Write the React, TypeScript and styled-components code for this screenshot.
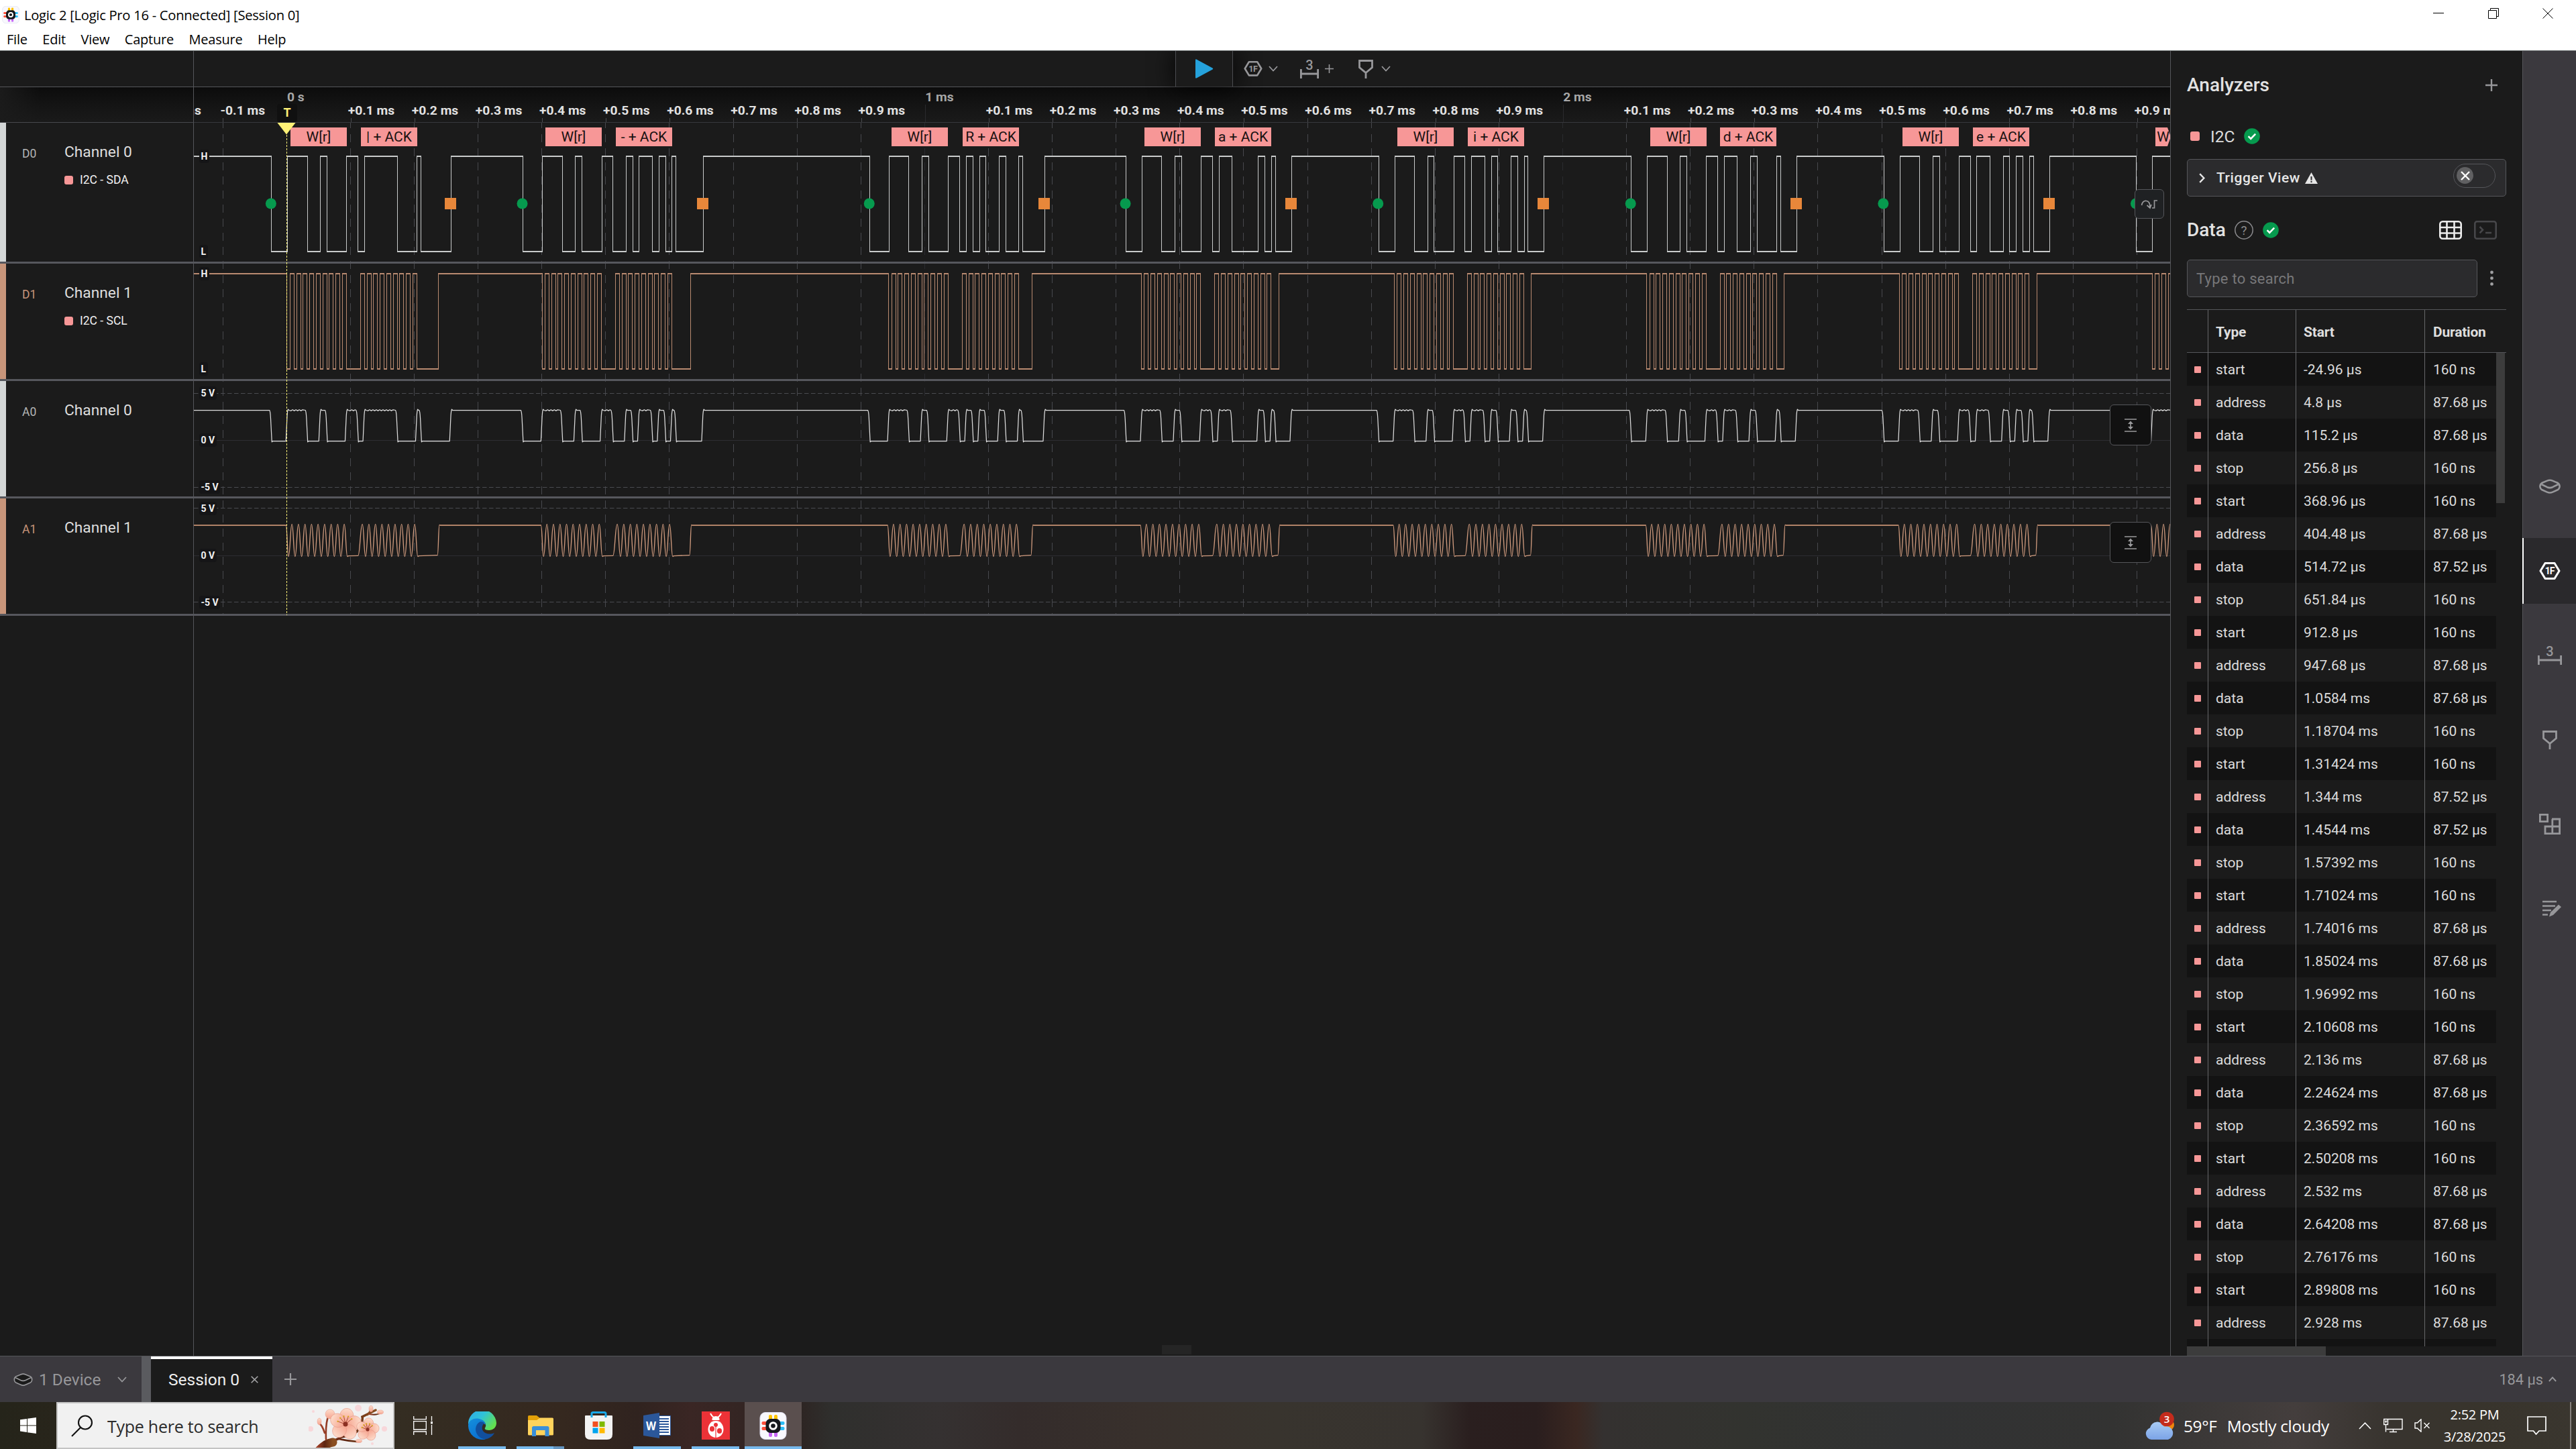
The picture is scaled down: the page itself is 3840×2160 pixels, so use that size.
import React from 'react';
import styled, { createGlobalStyle } from 'styled-components';

const Global = createGlobalStyle`
  * { box-sizing: border-box; }
  body { margin: 0; background: #1b1b1b; overflow: hidden; }
`;

const roboto = `Roboto, "Liberation Sans", sans-serif`;
const system = `"Open Sans", "Noto Sans", sans-serif`;
const line = '#55565a';
const panel = '#1b1b1b';
const chrome = '#3b393e';
const pink = '#f79797';
const green = '#069a4e';
const sand = '#c8957a';
const silver = '#d3d6d6';

/* ---------- time scale ---------- */
const PLOT_LEFT = 289;
const PLOT_WIDTH = 2946;
const PER_US = 0.9511;
const gridX = (ms: number) => 427.8 + 951.1 * ms;
const sigX = (us: number) => 428.4 + PER_US * us;

type Packet = { start: number; addr: number; data: number; stop: number; ch: string };
const packets: Packet[] = [
  { start: -24.96, addr: 4.8, data: 115.2, stop: 256.8, ch: '|' },
  { start: 368.96, addr: 404.48, data: 514.72, stop: 651.84, ch: '-' },
  { start: 912.8, addr: 947.68, data: 1058.4, stop: 1187.04, ch: 'R' },
  { start: 1314.24, addr: 1344, data: 1454.4, stop: 1573.92, ch: 'a' },
  { start: 1710.24, addr: 1740.16, data: 1850.24, stop: 1969.92, ch: 'i' },
  { start: 2106.08, addr: 2136, data: 2246.24, stop: 2365.92, ch: 'd' },
  { start: 2502.08, addr: 2532, data: 2642.24, stop: 2761.76, ch: 'e' },
  { start: 2898.08, addr: 2928, data: 3038.2, stop: 3158, ch: 'r' },
];

const byteBits = (code: number) => Array.from({ length: 8 }, (_, i) => (code >> (7 - i)) & 1);

/* edges: x positions where the line toggles; every line idles high */
function sdaEdges(): number[] {
  const out: number[] = [];
  let level = 1;
  const set = (x: number, v: number) => {
    if (v !== level) { out.push(x); level = v; }
  };
  packets.forEach((p) => {
    const a = sigX(p.addr);
    const d = sigX(p.data);
    set(sigX(p.start), 0);
    [...byteBits(0x72 << 1), 0].forEach((b, i) => set(a + 83.9 - 9.8 * (9 - i), b));
    set(a + 83.9, 1);
    [...byteBits(p.ch.charCodeAt(0)), 0].forEach((b, i) => set(d + 83.9 - 9.8 * (9 - i), b));
    set(d + 83.9, 1);
    set(d + 89.8, 0);
    set(sigX(p.stop), 1);
  });
  return out;
}

function sclEdges(): number[] {
  const out: number[] = [];
  packets.forEach((p) => {
    const a = sigX(p.addr) - 0.7;
    const d = sigX(p.data) - 0.7;
    out.push(a - 4.3);
    for (let j = 0; j < 9; j++) out.push(a + 9.75 * j, a + 9.75 * j + 6);
    for (let j = 0; j < 9; j++) out.push(d + 9.75 * j, d + 9.75 * j + 6);
    out.push(sigX(p.stop) - 19);
  });
  return out;
}

function digitalPaths(edges: number[], hi: number, lo: number) {
  let flat = '';
  let steep = '';
  let x = PLOT_LEFT;
  let level = hi;
  edges.forEach((e) => {
    const xe = Math.floor(e);
    flat += `M${x} ${level + 1}H${xe + 1}`;
    steep += `M${xe + 0.5} ${hi}V${lo + 2}`;
    x = xe;
    level = level === hi ? lo : hi;
  });
  flat += `M${x} ${level + 1}H${PLOT_LEFT + PLOT_WIDTH}`;
  return { flat, steep };
}

function analogData(edges: number[], hi: number, lo: number) {
  let d = `M${PLOT_LEFT} ${hi}`;
  let level = hi;
  edges.forEach((e, i) => {
    const next = level === hi ? lo : hi;
    const span = (edges[i + 1] ?? PLOT_LEFT + PLOT_WIDTH) - e;
    const over = next === hi ? -1.3 : 1.3;
    if (next === lo) d += `L${e - 3} ${level}Q${e - 1.8} ${level + 1} ${e - 1.2} ${level + 12}L${e + 0.6} ${next + over}`;
    else d += `L${e - 2.4} ${level}L${e - 0.6} ${next + 8}Q${e} ${next} ${e + 0.8} ${next + over}`;
    d += `L${e + 2} ${next}`;
    if (next === hi && span > 12 && span < 70) {
      for (let r = e + 5; r < e + span - 5; r += 5) d += `L${r} ${hi + 0.9}L${r + 2.5} ${hi - 0.7}`;
    }
    level = next;
  });
  return d + `L${PLOT_LEFT + PLOT_WIDTH} ${level}`;
}

function analogClock(hi: number, lo: number) {
  let d = `M${PLOT_LEFT} ${hi}`;
  let px = PLOT_LEFT;
  let py = hi;
  const curve = (x: number, y: number) => {
    const k = (x - px) * 0.48;
    d += `C${px + k} ${py} ${x - k} ${y} ${x} ${y}`;
    px = x; py = y;
  };
  const flat = (x: number, y = py) => { d += `L${x} ${y}`; px = x; py = y; };
  packets.forEach((p) => {
    [sigX(p.addr) - 0.7, sigX(p.data) - 0.7].forEach((a, n) => {
      if (n === 0) flat(a - 6, hi); else flat(a - 3.6, lo);
      if (n === 0) curve(a - 2.2, lo + 1.2);
      for (let j = 0; j < 9; j++) {
        curve(a + 9.75 * j + 2.9, hi - 1.6);
        curve(a + 9.75 * j + 7.6, lo + 1.2);
      }
      flat(px + 1.5, lo + 0.2);
    });
    flat(sigX(p.stop) - 20.5, lo - 0.8);
    curve(sigX(p.stop) - 17.6, hi - 0.6);
    flat(px + 1, hi);
  });
  return d;
}

/* the idle level between two packets, drawn heavier than the clock pulses */
const clockIdle = (y: number) =>
  packets.map((p, i) => `M${i === 0 ? PLOT_LEFT : sigX(packets[i - 1].stop) - 17} ${y}H${sigX(p.addr) - 6.5}`).join('');

const sda = sdaEdges();
const scl = sclEdges();

/* ---------- shell ---------- */
const Screen = styled.div`
  width: 3840px; height: 2160px; display: flex; flex-direction: column;
  background: ${panel}; font-family: ${roboto}; color: #dcdcdc; overflow: hidden;
`;
const TitleBar = styled.header`
  height: 76px; background: #fff; border-bottom: 1px solid #6a6f70; display: flex; flex-direction: column;
  font-family: ${system}; color: #000; flex: none; position: relative; z-index: 2;
`;
const TitleRow = styled.div`
  height: 43px; display: flex; align-items: center; padding-left: 3px; font-size: 20.2px; letter-spacing: -0.28px;
  svg { margin-right: 7px; }
`;
const WindowButtons = styled.div`
  margin-left: auto; margin-right: 1px; display: flex; align-items: center; height: 39px; align-self: flex-start;
  span { width: 81.5px; display: flex; justify-content: center; }
  svg { margin: 0; }
`;
const MenuRow = styled.nav`
  height: 30px; display: flex; align-items: center; padding-left: 10px; font-size: 20px; letter-spacing: -0.22px; gap: 22.5px;
`;
const Body = styled.div`display: flex; height: 1945px; flex: none;`;
const Capture = styled.main`width: 3235px; display: flex; flex-direction: column; position: relative;`;

/* ---------- toolbar ---------- */
const Toolbar = styled.div`
  height: 54px; border-bottom: 1px solid ${line}; display: flex; flex: none; position: relative; z-index: 1;
`;
const SideGap = styled.div`width: 289px; border-right: 1px solid ${line}; flex: none;`;
const Tools = styled.div`flex: 1; display: flex; align-items: center; padding-left: 1463px; color: #97979a;`;
const PlayButton = styled.div`
  width: 86px; height: 53px; border: solid #4b4c50; border-width: 0 1px; display: flex; align-items: center;
  padding-left: 29px; background: ${panel}; box-shadow: 0 0 34px 4px rgba(0,0,0,.7);
`;
const ToolGroup = styled.div<{ $left: number; $gap: number }>`
  display: flex; align-items: center; margin-left: ${(p) => p.$left}px; gap: ${(p) => p.$gap}px; position: relative;
`;

/* ---------- ruler ---------- */
const RulerRow = styled.div`
  height: 53px; display: flex; border-bottom: 1px solid #37383c; flex: none;
  background: linear-gradient(#0c0c0c, #141414 50%, #1a1a1a);
`;
const RulerSide = styled(SideGap)`
  border-bottom: 1px solid #48494d; height: 53px;
  background: linear-gradient(90deg, ${panel}, rgba(27,27,27,0) 60px);
`;
const Ruler = styled.div`
  flex: 1; display: flex; overflow: hidden; padding-left: 0;
  & > :first-child { margin-left: -51.7px; }
`;
const Tick = styled.div`
  width: 95.11px; flex: none; height: 53px; display: flex; flex-direction: column; justify-content: flex-end;
  font-weight: 700; font-size: 19.25px; line-height: 22px; color: #e2e2e2; white-space: nowrap;
  span { margin-left: -4px; }
  i { width: 1px; height: 7px; background: #4a4b4f; }
`;
const MajorTick = styled(Tick)`
  color: #a8a8a8; justify-content: flex-start; padding-top: 4px;
  span { margin-left: 0.5px; }
  i { height: 27px; background: #2a2a2d; }
`;

/* ---------- channels ---------- */
const ChannelRow = styled.section<{ $h: number }>`
  height: ${(p) => p.$h}px; border-bottom: 3px solid #56575d; display: flex; flex: none; box-sizing: content-box;
`;
const ColorBar = styled.div<{ $c: string }>`width: 9px; background: ${(p) => p.$c};`;
const ChannelLabel = styled.div`
  width: 280px; border-right: 1px solid ${line}; display: flex; padding: 30px 0 0 24px;
`;
const ChannelId = styled.div<{ $c: string }>`
  width: 63px; font-size: 17.5px; line-height: 33px; color: ${(p) => p.$c};
`;
const ChannelText = styled.div`
  font-size: 22.75px; line-height: 28px; color: #dedede;
`;
const ChannelSub = styled.div`
  display: flex; align-items: center; gap: 10px; font-size: 17.5px; line-height: 22px; color: #f0f0f0; margin-top: 16px;
`;
const Chip = styled.i<{ $s: number }>`
  width: ${(p) => p.$s}px; height: ${(p) => p.$s}px; border-radius: ${(p) => (p.$s > 10 ? 3 : 1)}px; background: ${pink}; flex: none;
`;
const Plot = styled.div`flex: 1; position: relative; overflow: hidden;`;
const PlotSvg = styled.svg`display: block;`;
const Frame = styled.div<{ $cut?: boolean }>`
  position: absolute; top: 7px; height: 28px; background: ${pink}; color: #1a1212; font-size: 21px; line-height: 28px;
  text-align: center; white-space: nowrap; overflow: hidden;
  clip-path: ${(p) => (p.$cut ? 'polygon(0 0, 18px 0, 100% 50%, 18px 100%, 0 100%)' : 'none')};
`;
const AxisLabel = styled.div<{ $y: number }>`
  position: absolute; left: 8px; top: ${(p) => p.$y - 10}px; height: 20px; padding: 0 2.5px; background: #151517;
  border-radius: 4px; font-weight: 700; font-size: 14px; line-height: 20px; color: #f2f2f2; white-space: pre;
`;
const OverlayButton = styled.div<{ $x: number; $y: number; $w: number; $h: number; $bg: string }>`
  position: absolute; left: ${(p) => p.$x}px; top: ${(p) => p.$y}px; width: ${(p) => p.$w}px; height: ${(p) => p.$h}px;
  border: 1px solid ${line}; border-radius: 6px; background: ${(p) => p.$bg}; display: flex; align-items: center; justify-content: center;
`;
const EmptyArea = styled.div`
  flex: 1; display: flex; align-items: flex-end;
  & > :first-child { align-self: stretch; }
`;
const Handle = styled.div`width: 44px; height: 14px; background: #252525; margin: 0 0 2px 1443px;`;
const TriggerFlag = styled.div`
  position: absolute; left: 413px; top: 79px; width: 30px; display: flex; flex-direction: column; align-items: flex-start;
  z-index: 1;
`;
const TriggerLetter = styled.div`
  width: 30px; height: 27px; border-radius: 4px; background: #101010; color: #fff176; font-weight: 700; font-size: 18px;
  line-height: 26px; text-align: center;
`;
const TriggerLine = styled.div`
  width: 1px; height: 716px; margin-left: 14px;
  background: repeating-linear-gradient(#fff176 0 3px, transparent 3px 5px);
`;

/* ---------- side panel ---------- */
const Panel = styled.aside`
  width: 525px; border-left: 1px solid ${line}; padding: 0 24px 0 24px; display: flex; flex-direction: column;
`;
const Heading = styled.h2`margin: 0; font-size: 28px; font-weight: 500; line-height: 34px; color: #e2e2e2;`;
const PanelHead = styled.div`
  display: flex; align-items: center; justify-content: space-between; height: 34px; margin-top: 34px; padding-right: 13px;
`;
const AnalyzerRow = styled.div`
  display: flex; align-items: center; height: 34px; margin-top: 42px; padding-left: 5px; font-size: 24.5px;
  span { margin: 0 14px 0 16px; }
`;
const TriggerBox = styled.div`
  height: 56px; margin-top: 17px; border: 1px solid ${line}; border-radius: 5px; background: #2b2b2d; display: flex;
  align-items: center; padding: 0 15px 0 17px; font-size: 21px; font-weight: 500; letter-spacing: 0.55px; color: #e6e6e6;
  span { margin: 0 7px 0 17px; }
`;
const Toggle = styled.div`
  margin: -7px 0 0 auto; width: 63px; height: 36px; border: 1px solid ${line}; border-radius: 18px; padding: 4.5px 4px;
`;
const Knob = styled.div`
  width: 25px; height: 25px; border-radius: 50%; background: #606062; display: flex; align-items: center; justify-content: center;
`;
const DataHead = styled.div`
  display: flex; align-items: center; height: 34px; margin-top: 33px; padding-right: 14px;
  svg { flex: none; }
`;
const HelpIcon = styled.svg`margin-left: 13.5px; margin-right: 14px;`;
const ViewIcon = styled.svg<{ $push?: boolean }>`margin-left: ${(p) => (p.$push ? 'auto' : '18px')};`;
const SearchRow = styled.div`display: flex; align-items: center; margin-top: 27px; justify-content: space-between;`;
const SearchField = styled.div`
  width: 433px; height: 56px; border: 1px solid ${line}; border-radius: 5px; background: #2b2b2d; padding-left: 13px;
  font-size: 22px; letter-spacing: 0.25px; line-height: 55px; color: #777779;
`;
const Table = styled.div`margin-top: 18px; border-top: 1px solid ${line};`;
const Cells = styled.div`display: grid; grid-template-columns: 32px 131px 192px 1fr;`;
const HeadCells = styled(Cells)`
  height: 64px; border-bottom: 1px solid ${line}; font-weight: 700; font-size: 21px; line-height: 66px; letter-spacing: -0.2px; color: #dedede;
`;
const Cell = styled.div`
  border-right: 1px solid #66676a; padding-left: 11px; white-space: nowrap; display: flex; align-items: center;
  &:first-child { padding-left: 11px; }
  &:last-child { border-right: 0; padding-left: 12px; }
`;
const RowsWrap = styled.div`display: flex; height: 1481px;`;
const Rows = styled.div`width: 461px; overflow: hidden;`;
const DataRow = styled(Cells)<{ $dark: boolean }>`
  height: 49px; background: ${(p) => (p.$dark ? '#131313' : panel)}; font-size: 21px; color: #dcdcdc;
`;
const VThumb = styled.div`width: 13px; height: 224px; background: #3c3c3c;`;
const HThumb = styled.div`width: 207px; height: 14px; background: #3c3c3c;`;
const Rail = styled.nav`
  width: 80px; background: ${chrome}; border-left: 1px solid ${line}; display: flex; flex-direction: column; gap: 28px; padding-top: 600px;
`;
const RailButton = styled.div<{ $on?: boolean }>`
  height: 98px; display: flex; align-items: center; justify-content: center; color: ${(p) => (p.$on ? '#fff' : '#97979a')};
  background: ${(p) => (p.$on ? '#2a292c' : 'transparent')};
  border-left: 2px solid ${(p) => (p.$on ? '#fff' : 'transparent')}; margin-left: -1px;
`;

/* ---------- footer ---------- */
const Footer = styled.footer`
  height: 69px; background: ${chrome}; border-top: 1px solid ${line}; display: flex; align-items: center; font-size: 24.5px;
  color: #97979a; flex: none;
`;
const Device = styled.div`
  width: 225px; height: 68px; border-right: 14px solid #5a5b5f; display: flex; align-items: center; padding-left: 20px;
  span { margin: 0 25px 0 9px; }
`;
const SessionTab = styled.div`
  width: 181px; height: 68px; background: ${panel}; border-top: 4px solid #fff; color: #ededed; display: flex; align-items: center;
  padding: 0 21px 3px 26px; justify-content: space-between;
`;
const Plus = styled.div`margin-left: 18px; display: flex;`;
const Timing = styled.div`margin-left: auto; padding-right: 29px; display: flex; align-items: center; gap: 8px; font-size: 21.75px;`;

/* ---------- taskbar ---------- */
const Taskbar = styled.div`
  height: 70px; display: flex; align-items: center; font-family: ${system}; color: #fff; flex: none;
  background: linear-gradient(90deg, #25241a 0, #28251b 84px, #342d22 600px, #35281f 840px, #30231f 950px, #3a2624 1030px, #2d2422 1190px,
    #2f2f2d 1240px, #353131 1400px, #342c2b 1520px, #38302c 1700px, #38342e 1900px, #37332f 2120px, #2a1f1f 2190px, #2a1e1e 2290px,
    #3a2721 2350px, #343130 2390px, #32332f 2600px, #313233 2850px, #333332 3150px, #443e3d 3420px, #38342f 3560px, #38342c 3700px, #3a362f 3840px);
`;
const StartButton = styled.div`width: 84px; display: flex; justify-content: center;`;
const SearchBox = styled.div`
  width: 504px; height: 70px; background: #f1f1f1; border: 2px solid #c3c3c3; display: flex; align-items: center; color: #2b2b2b;
  padding-left: 20px; font-size: 25px; letter-spacing: -0.25px; overflow: hidden;
  span { margin: 2px 0 0 21px; white-space: nowrap; }
  svg:last-child { margin-left: auto; }
`;
const TaskIcon = styled.div<{ $active?: boolean; $run?: boolean; $group?: boolean }>`
  width: 87px; height: 70px; display: flex; align-items: center; justify-content: center;
  background: ${(p) => (p.$active ? 'linear-gradient(#76b9ed,#76b9ed) 0 100%/85px 4px no-repeat, #5a4f4e' : 'none')};
  ${(p) => p.$active && 'width: 85px;'}
  ${(p) => p.$run && !p.$active && `background: linear-gradient(90deg, #76b9ed ${p.$group ? '55px, #6394bf 55px' : '71px'}) 8px 100%/71px 4px no-repeat;`}
`;
const Weather = styled.div`
  margin-left: auto; display: flex; align-items: center; font-size: 24.4px; letter-spacing: -0.3px; white-space: pre;
  svg { margin-right: 14px; }
  span + span { margin-left: 15px; }
`;
const Tray = styled.div`display: flex; align-items: center; margin-left: 44px; gap: 17.5px; width: 123px;`;
const Clock = styled.div`
  width: 100px; text-align: center; font-size: 20px; line-height: 33px; letter-spacing: -0.25px; white-space: nowrap;
`;
const Notice = styled.div`margin-left: 28px; width: 66px; height: 70px; border-right: 2px solid #85807c; display: flex; align-items: center;`;
const DesktopEdge = styled.div`width: 7px;`;

/* ---------- icons ---------- */
const IconSvg = styled.svg`overflow: visible;`;
const SaleaeIcon = ({ s }: { s: number }) => (
  <svg width={s} height={s} viewBox="0 0 40 41">
    <rect x="0.5" y="0.5" width="39" height="40" rx="8" fill="#f8f8fd" stroke="#dfdff0" />
    <rect x="13.5" y="4" width="5" height="9" rx="2" fill="#ffc400" /><rect x="21.5" y="4" width="5" height="9" rx="2" fill="#ffc400" />
    <rect x="13.5" y="28" width="5" height="9" rx="2" fill="#c566f5" /><rect x="21.5" y="28" width="5" height="9" rx="2" fill="#c566f5" />
    <rect x="3" y="14" width="9" height="5" rx="2" fill="#ff4f3c" /><rect x="3" y="22" width="9" height="5" rx="2" fill="#ff4f3c" />
    <rect x="28" y="14" width="9" height="5" rx="2" fill="#2bbdf7" /><rect x="28" y="22" width="9" height="5" rx="2" fill="#2bbdf7" />
    <rect x="9" y="10" width="22" height="21" rx="7" fill="#14171c" />
    <circle cx="20" cy="20.5" r="4.8" fill="none" stroke="#fff" strokeWidth="3" />
  </svg>
);
const HexIcon = ({ w, h, fs }: { w: number; h: number; fs: number }) => (
  <IconSvg width={w} height={h} viewBox="0 0 32 27" fill="none" stroke="currentColor" strokeWidth="3">
    <path d="M9 2H23L30 13.5L23 25H9L2 13.5Z" strokeLinejoin="round" />
    <text x="15.7" y="18.6" textAnchor="middle" fontFamily="Roboto" fontWeight="700" fontSize={fs} letterSpacing="-0.8" fill="currentColor" stroke="none">1F</text>
  </IconSvg>
);
const MeasureIcon = ({ w }: { w: number }) => (
  <IconSvg width={w} height={28} viewBox={`0 0 ${w} 28`} fill="none" stroke="currentColor" strokeWidth="2.8">
    <path d={`M1.4 14V28M${w - 1.4} 14V28M1.4 21H${w - 1.4}`} />
    <text x={w / 2} y="15" textAnchor="middle" fontFamily="Roboto" fontWeight="500" fontSize="20" fill="currentColor" stroke="none">3</text>
  </IconSvg>
);
const MarkerIcon = () => (
  <svg width="22" height="28" viewBox="0 0 22 28" fill="none" stroke="currentColor" strokeWidth="2.8">
    <path d="M1.5 1.5H20.5V11.5L11 19.5L1.5 11.5ZM11 19V28" />
  </svg>
);
const Chevron = ({ w = 14, h = 9, up = false, sw = 1.8 }: { w?: number; h?: number; up?: boolean; sw?: number }) => (
  <svg width={w} height={h} viewBox="0 0 14 9" fill="none" stroke="currentColor" strokeWidth={sw}>
    <path d={up ? 'M1 8L7 1.5L13 8' : 'M1 1L7 7.5L13 1'} />
  </svg>
);
const CheckBadge = () => (
  <svg width="24" height="24" viewBox="0 0 24 24">
    <circle cx="12" cy="12" r="11.8" fill={green} />
    <path d="M6.6 12.2L10.2 15.8L17.2 8.6" fill="none" stroke="#fff" strokeWidth="2.6" />
  </svg>
);
const DeviceIcon = ({ w, h, fill, sw = 2.6 }: { w: number; h: number; fill: string; sw?: number }) => (
  <svg width={w} height={h} viewBox="0 0 32 22" fill={fill} stroke="currentColor" strokeWidth={sw} strokeLinejoin="round">
    <path d="M12 2.6Q16 .8 20 2.6L28 6Q31 8 30.5 12Q30 15 28 16L20 19.6Q16 21.4 12 19.6L4 16Q2 15 1.5 12Q1 8 4 6Z" />
    <path d="M3.5 8L12 12.2Q16 14 20 12.2L28.5 8" fill="none" />
  </svg>
);

const BlossomArt = () => {
  const flower = (cx: number, cy: number, r: number, key: string) => (
    <g key={key} transform={`translate(${cx} ${cy})`}>
      {[0, 72, 144, 216, 288].map((a) => (
        <ellipse key={a} cx="0" cy={-r * 0.58} rx={r * 0.46} ry={r * 0.5} fill="url(#petal)" stroke="#e79a8a" strokeWidth="0.6" transform={`rotate(${a + 8})`} />
      ))}
      {[-70, -40, -12, 20, 50].map((a) => (
        <g key={a} transform={`rotate(${a})`}>
          <path d={`M0 0V${-r * 0.52}`} stroke="#a33f2c" strokeWidth="0.8" />
          <circle cy={-r * 0.55} r="1.2" fill="#d9a520" />
        </g>
      ))}
      <circle r={r * 0.16} fill="#8c2f22" />
    </g>
  );
  return (
    <svg width="126" height="66" viewBox="460 2092 126 66">
      <defs>
        <linearGradient id="petal" x1="0" y1="0" x2="0" y2="1"><stop offset="0" stopColor="#fddccb" /><stop offset="1" stopColor="#f6a48f" /></linearGradient>
        <linearGradient id="bark"><stop offset="0" stopColor="#a8452c" /><stop offset="0.5" stopColor="#5c2410" /><stop offset="1" stopColor="#8a4e20" /></linearGradient>
      </defs>
      {[[534, 2099, 5], [463, 2130, 4], [573, 2130, 4], [467, 2104, 2], [555, 2152, 2]].map(([x, y, r]) => (
        <circle key={x} cx={x} cy={y} r={r} fill="#f9cdd2" opacity="0.75" />
      ))}
      <g fill="none" stroke="url(#bark)" strokeLinecap="round">
        <path d="M466 2166Q478 2150 490 2149Q502 2147 509 2142Q524 2140 532 2134Q542 2120 540 2112Q552 2106 560 2102" strokeWidth="3.5" />
        <path d="M472 2168Q482 2152 496 2150" strokeWidth="13" />
        <path d="M486 2146Q485 2120 490 2110M484 2136Q480 2124 476 2122M505 2145Q518 2148 532 2149M548 2109Q552 2104 553 2100" strokeWidth="2.6" />
        <path d="M550 2108Q562 2110 568 2106" strokeWidth="2" />
      </g>
      <g fill="url(#petal)" stroke="#e79a8a" strokeWidth="0.5">
        <ellipse cx="492" cy="2108" rx="7" ry="7" /><ellipse cx="476" cy="2119" rx="3" ry="5" /><ellipse cx="553" cy="2100" rx="3" ry="4.5" />
        <ellipse cx="567" cy="2105" rx="4.5" ry="3" /><ellipse cx="535" cy="2148" rx="4.5" ry="2.6" />
      </g>
      {flower(515, 2123, 22, 'a')}
      {flower(548, 2131, 16, 'b')}
    </svg>
  );
};

/* ---------- plot parts ---------- */
const Grid = ({ top, h }: { top: number; h: number }) => (
  <g stroke="#47484d" strokeWidth="1">
    {Array.from({ length: 31 }, (_, i) => i - 1).map((n) =>
      n === 0 ? null : (
        <line key={n} x1={Math.round(gridX(n / 10)) - 0.5} x2={Math.round(gridX(n / 10)) - 0.5} y1={top} y2={top + h}
          stroke={n % 10 === 0 ? '#2a2b2f' : undefined} strokeDasharray="12 9" strokeDashoffset={(top - 179) % 21} />
      ))}
  </g>
);

const Digital = ({ top, h, hi, lo, edges, color, children }: { top: number; h: number; hi: number; lo: number; edges: number[]; color: string; children?: React.ReactNode }) => {
  const { flat, steep } = digitalPaths(edges, hi, lo);
  return (
    <PlotSvg width={PLOT_WIDTH} height={h} viewBox={`${PLOT_LEFT} ${top} ${PLOT_WIDTH} ${h}`}>
      <Grid top={top} h={h} />
      <path d={steep} stroke={color} fill="none" />
      <path d={flat} stroke={color} strokeWidth="2" fill="none" />
      {children}
    </PlotSvg>
  );
};

const Analog = ({ top, v5, v0, n5, d, color, w, idle }: { top: number; v5: number; v0: number; n5: number; d: string; color: string; w: number; idle?: string }) => (
  <PlotSvg width={PLOT_WIDTH} height={172} viewBox={`${PLOT_LEFT} ${top} ${PLOT_WIDTH} 172`}>
    <Grid top={top} h={172} />
    <path d={`M289 ${v5 + 0.5}H3235M289 ${n5 + 0.5}H3235`} stroke="#4a4b50" strokeDasharray="6.5 3.5" />
    <path d={`M289 ${v0 + 0.5}H3235`} stroke="#2d2d32" />
    <path d={d} stroke={color} strokeWidth={w} fill="none" strokeLinejoin="round" />
    {idle && <path d={idle} stroke="#b08267" strokeWidth="2" fill="none" />}
  </PlotSvg>
);

const FitIcon = () => (
  <svg width="18" height="20" viewBox="0 0 18 20" fill="none" stroke="#9a9a9c" strokeWidth="1.6">
    <path d="M0 1H18M0 19H18" /><path d="M9 5V15" /><path d="M9 3.4L13 8H5ZM9 16.6L13 12H5Z" fill="#9a9a9c" stroke="none" />
  </svg>
);

const rows: [string, string, string][] = [
  ['start', '-24.96 µs', '160 ns'], ['address', '4.8 µs', '87.68 µs'], ['data', '115.2 µs', '87.68 µs'], ['stop', '256.8 µs', '160 ns'],
  ['start', '368.96 µs', '160 ns'], ['address', '404.48 µs', '87.68 µs'], ['data', '514.72 µs', '87.52 µs'], ['stop', '651.84 µs', '160 ns'],
  ['start', '912.8 µs', '160 ns'], ['address', '947.68 µs', '87.68 µs'], ['data', '1.0584 ms', '87.68 µs'], ['stop', '1.18704 ms', '160 ns'],
  ['start', '1.31424 ms', '160 ns'], ['address', '1.344 ms', '87.52 µs'], ['data', '1.4544 ms', '87.52 µs'], ['stop', '1.57392 ms', '160 ns'],
  ['start', '1.71024 ms', '160 ns'], ['address', '1.74016 ms', '87.68 µs'], ['data', '1.85024 ms', '87.68 µs'], ['stop', '1.96992 ms', '160 ns'],
  ['start', '2.10608 ms', '160 ns'], ['address', '2.136 ms', '87.68 µs'], ['data', '2.24624 ms', '87.68 µs'], ['stop', '2.36592 ms', '160 ns'],
  ['start', '2.50208 ms', '160 ns'], ['address', '2.532 ms', '87.68 µs'], ['data', '2.64208 ms', '87.68 µs'], ['stop', '2.76176 ms', '160 ns'],
  ['start', '2.89808 ms', '160 ns'], ['address', '2.928 ms', '87.68 µs'],
];

const Label = ({ id, name, sub, color }: { id: string; name: string; sub?: string; color: string }) => (
  <ChannelLabel>
    <ChannelId $c={color}>{id}</ChannelId>
    <ChannelText>
      {name}
      {sub && <ChannelSub><Chip $s={13} />{sub}</ChannelSub>}
    </ChannelText>
  </ChannelLabel>
);

const ticks = Array.from({ length: 32 }, (_, i) => i - 2);
const frameLeft = (us: number) => Math.floor(sigX(us) + 0.2) - PLOT_LEFT;

export default function App() {
  return (
    <Screen>
      <Global />
      <TitleBar>
        <TitleRow>
          <SaleaeIcon s={26} />
          Logic 2 [Logic Pro 16 - Connected] [Session 0]
          <WindowButtons>
            <span><svg width="16" height="16"><path d="M0 7.5H16" stroke="#000" /></svg></span>
            <span><svg width="16" height="16" fill="none" stroke="#000"><path d="M.5 3.5H12.5V15.5H.5ZM3.5 3V.5H15.5V12.5H13" /></svg></span>
            <span><svg width="16" height="16" fill="none" stroke="#000"><path d="M.5 .5L15.5 15.5M15.5 .5L.5 15.5" /></svg></span>
          </WindowButtons>
        </TitleRow>
        <MenuRow>
          {['File', 'Edit', 'View', 'Capture', 'Measure', 'Help'].map((m) => <span key={m}>{m}</span>)}
        </MenuRow>
      </TitleBar>

      <Body>
        <Capture>
          <Toolbar>
            <SideGap />
            <Tools>
              <PlayButton>
                <svg width="27" height="29" viewBox="0 0 27 29"><path d="M1.5 .4L25.6 13.4Q27 14.5 25.6 15.6L1.5 28.6Q0 29 0 27.6V1.4Q0 0 1.5 .4Z" fill="#25a2dc" /></svg>
              </PlayButton>
              <ToolGroup $left={16} $gap={9}><HexIcon w={28} h={24.5} fs={14.5} /><Chevron /></ToolGroup>
              <ToolGroup $left={33} $gap={8.5}>
                <MeasureIcon w={28} />
                <svg width="13" height="13"><path d="M6.5 0V13M0 6.5H13" stroke="currentColor" strokeWidth="1.6" /></svg>
              </ToolGroup>
              <ToolGroup $left={37.5} $gap={12}><MarkerIcon /><Chevron /></ToolGroup>
            </Tools>
          </Toolbar>

          <RulerRow>
            <RulerSide />
            <Ruler>
              {ticks.map((n) => {
                if (n % 10 === 0) return <MajorTick key={n}><span>{n === 0 ? '0 s' : `${n / 10} ms`}</span><i /></MajorTick>;
                const label = n < 0 ? `-0.${-n} ms` : `+0.${n % 10} ms`;
                return <Tick key={n}><span>{label}</span><i /></Tick>;
              })}
            </Ruler>
          </RulerRow>

          <ChannelRow $h={207}>
            <ColorBar $c={silver} />
            <Label id="D0" name="Channel 0" sub="I2C - SDA" color="#b4b6b6" />
            <Plot>
              <Digital top={183} h={207} hi={232} lo={374} edges={sda} color="#c9cbcb">
                {packets.map((p) => (
                  <g key={p.start}>
                    <circle cx={sigX(p.start) - 0.8} cy="303.5" r="8" fill={green} />
                    <rect x={Math.floor(sigX(p.stop)) - 9} y="295" width="17" height="17" fill="#e8873a" />
                  </g>
                ))}
              </Digital>
              {packets.slice(0, 7).map((p) => (
                <React.Fragment key={p.addr}>
                  <Frame style={{ left: frameLeft(p.addr), width: 84 }}>W[r]</Frame>
                  <Frame style={{ left: frameLeft(p.data), width: 84 }}>{p.ch} + ACK</Frame>
                </React.Fragment>
              ))}
              <Frame $cut style={{ left: frameLeft(2928), width: 23 }}>W</Frame>
              <AxisLabel $y={49.5}>H</AxisLabel>
              <AxisLabel $y={192}>L</AxisLabel>
              <OverlayButton $x={2893} $y={99} $w={44} $h={44} $bg="#1f2123">
                <svg width="26" height="17" viewBox="0 0 26 17" fill="none" stroke="#98989a" strokeWidth="1.7">
                  <path d="M1.5 10Q3 3 8.5 3.5Q14 4 14 13M9.5 10L14 14L16 9M17 14H20.5V3H25" />
                </svg>
              </OverlayButton>
            </Plot>
          </ChannelRow>

          <ChannelRow $h={172}>
            <ColorBar $c={sand} />
            <Label id="D1" name="Channel 1" sub="I2C - SCL" color={sand} />
            <Plot>
              <Digital top={393} h={172} hi={407} lo={549} edges={scl} color="#b98a70" />
              <AxisLabel $y={14.5}>H</AxisLabel>
              <AxisLabel $y={157}>L</AxisLabel>
            </Plot>
          </ChannelRow>

          <ChannelRow $h={172}>
            <ColorBar $c={silver} />
            <Label id="A0" name="Channel 0" color="#b4b6b6" />
            <Plot>
              <Analog top={568} v5={586} v0={656} n5={726} d={analogData(sda, 611.5, 657.5)} color="#dcdcdc" w={1.25} />
              <AxisLabel $y={18}>5 V</AxisLabel>
              <AxisLabel $y={88}>0 V</AxisLabel>
              <AxisLabel $y={158}>-5 V</AxisLabel>
              <OverlayButton $x={2856} $y={35} $w={62} $h={61} $bg="#111111"><FitIcon /></OverlayButton>
            </Plot>
          </ChannelRow>

          <ChannelRow $h={172}>
            <ColorBar $c={sand} />
            <Label id="A1" name="Channel 1" color={sand} />
            <Plot>
              <Analog top={743} v5={757} v0={828} n5={897} d={analogClock(783, 828.4)} idle={clockIdle(783)} color="#d09b7e" w={1.35} />
              <AxisLabel $y={15}>5 V</AxisLabel>
              <AxisLabel $y={85}>0 V</AxisLabel>
              <AxisLabel $y={155}>-5 V</AxisLabel>
              <OverlayButton $x={2856} $y={35} $w={62} $h={61} $bg="#111111"><FitIcon /></OverlayButton>
            </Plot>
          </ChannelRow>

          <EmptyArea><SideGap /><Handle /></EmptyArea>

          <TriggerFlag>
            <TriggerLetter>T</TriggerLetter>
            <PlotSvg width="28" height="19" viewBox="0 -1 28 19"><path d="M.5 0H27.5L14 17.5Z" fill="#fff176" /></PlotSvg>
            <TriggerLine />
          </TriggerFlag>
        </Capture>

        <Panel>
          <PanelHead>
            <Heading>Analyzers</Heading>
            <svg width="18" height="18"><path d="M9 0V18M0 9H18" stroke="#97979a" strokeWidth="2.4" /></svg>
          </PanelHead>
          <AnalyzerRow><Chip $s={14} /><span>I2C</span><CheckBadge /></AnalyzerRow>
          <TriggerBox>
            <svg width="9" height="15" viewBox="0 0 9 15" fill="none" stroke="#e6e6e6" strokeWidth="2.4"><path d="M1.2 1.2L7.4 7.5L1.2 13.8" /></svg>
            <span>Trigger View</span>
            <svg width="19" height="17" viewBox="0 0 19 17"><path d="M9.5 0L19 17H0Z" fill="#e6e6e6" /><path d="M9.5 6V11.5M9.5 12.8V15" stroke="#2b2b2d" strokeWidth="2" /></svg>
            <Toggle><Knob><svg width="14" height="14"><path d="M1 1L13 13M13 1L1 13" stroke="#fff" strokeWidth="2.4" /></svg></Knob></Toggle>
          </TriggerBox>
          <DataHead>
            <Heading>Data</Heading>
            <HelpIcon width="28" height="28" viewBox="0 0 28 28">
              <circle cx="14" cy="14" r="13.2" fill="none" stroke="#8b8b8e" strokeWidth="1.5" />
              <text x="14" y="20.5" textAnchor="middle" fontFamily="Roboto" fontSize="19" fill="#8b8b8e">?</text>
            </HelpIcon>
            <CheckBadge />
            <ViewIcon $push width="34" height="28" viewBox="0 0 34 28" fill="none" stroke="#ececec" strokeWidth="2.6">
              <rect x="1.3" y="1.3" width="31.4" height="25.4" rx="4" /><path d="M11.5 1V27M22.5 1V27M1 10H33M1 18.5H33" />
            </ViewIcon>
            <ViewIcon width="34" height="28" viewBox="0 0 34 28" fill="none" stroke="#47474a" strokeWidth="2.6">
              <rect x="1.3" y="1.3" width="31.4" height="25.4" rx="3" /><path d="M8.5 9L13 13.7L8.5 18.4M17 18H26" />
            </ViewIcon>
          </DataHead>
          <SearchRow>
            <SearchField>Type to search</SearchField>
            <svg width="41" height="24" fill="#a0a0a2"><circle cx="19.5" cy="3" r="2.4" /><circle cx="19.5" cy="11.7" r="2.4" /><circle cx="19.5" cy="20.4" r="2.4" /></svg>
          </SearchRow>
          <Table>
            <HeadCells><Cell /><Cell>Type</Cell><Cell>Start</Cell><Cell>Duration</Cell></HeadCells>
            <RowsWrap>
              <Rows>
                {rows.map(([type, start, dur], i) => (
                  <DataRow key={i} $dark={i % 2 === 0}>
                    <Cell><Chip $s={10} /></Cell><Cell>{type}</Cell><Cell>{start}</Cell><Cell>{dur}</Cell>
                  </DataRow>
                ))}
                <DataRow $dark><Cell /><Cell /><Cell /><Cell /></DataRow>
              </Rows>
              <VThumb />
            </RowsWrap>
            <HThumb />
          </Table>
        </Panel>

        <Rail>
          <RailButton><DeviceIcon w={32} h={22} fill="none" /></RailButton>
          <RailButton $on><HexIcon w={32} h={28} fs={14} /></RailButton>
          <RailButton><MeasureIcon w={36} /></RailButton>
          <RailButton><MarkerIcon /></RailButton>
          <RailButton>
            <svg width="32" height="32" viewBox="0 1 32 32" fill="none" stroke="currentColor" strokeWidth="2.8">
              <path d="M1.4 2.4H12.6V12.6H1.4ZM19 9H30.6V30.6H9V20H30.6M19.8 9V30.6" />
            </svg>
          </RailButton>
          <RailButton>
            <svg width="35" height="26" viewBox="-5 0 35 26" fill="none" stroke="currentColor" strokeWidth="2.4">
              <path d="M1 2H22M1 8.5H20M1 15H14M1 21.5H9" /><path d="M11 24.5L13 18L25 6.5L29 10L17 22Z" fill="currentColor" stroke="none" />
            </svg>
          </RailButton>
        </Rail>
      </Body>

      <Footer>
        <Device><DeviceIcon w={29} h={21} fill="#1b1b1b" sw={1.8} /><span>1 Device</span><Chevron /></Device>
        <SessionTab>Session 0<svg width="11" height="11"><path d="M.7 .7L10.3 10.3M10.3 .7L.7 10.3" stroke="#a5a5a7" strokeWidth="1.6" /></svg></SessionTab>
        <Plus><svg width="18" height="18"><path d="M9 0V18M0 9H18" stroke="#97979a" strokeWidth="2.2" /></svg></Plus>
        <Timing>184 µs<Chevron w={12} h={8} up sw={2.2} /></Timing>
      </Footer>

      <Taskbar>
        <StartButton>
          <svg width="24" height="24" viewBox="0 0 24 24" fill="#fff"><path d="M0 3.3L10 2V11.4H0ZM11 1.8L24 0V11.4H11ZM0 12.5H10V22L0 20.6ZM11 12.5H24V24L11 22.2Z" /></svg>
        </StartButton>
        <SearchBox>
          <svg width="33" height="33" viewBox="0 0 33 33" fill="none" stroke="#111" strokeWidth="2.1"><circle cx="21" cy="11.5" r="10" /><path d="M14 19L1 32" /></svg>
          <span>Type here to search</span>
          <BlossomArt />
        </SearchBox>
        <TaskIcon>
          <svg width="32" height="28" viewBox="0 0 32 28" fill="none" stroke="#fff" strokeWidth="1.3">
            <path d="M.7 0V4.7H19.3V0M.7 7.7H19.3V20H.7ZM.7 28V23H19.3V28M27.5 0V7M27.5 13V28" /><path d="M26 8H29V11.5H26Z" fill="#fff" stroke="none" />
          </svg>
        </TaskIcon>
        <TaskIcon $run>
          <svg width="42" height="42" viewBox="0 0 42 42">
            <defs>
              <linearGradient id="eg" x1="0" y1="0" x2="1" y2="0.6"><stop offset="0" stopColor="#2fa8e8" /><stop offset="0.5" stopColor="#2fc2d8" /><stop offset="1" stopColor="#63e04f" /></linearGradient>
              <linearGradient id="eb" x1="0" y1="0" x2="0.6" y2="1"><stop offset="0" stopColor="#1590dd" /><stop offset="1" stopColor="#0a6fd0" /></linearGradient>
            </defs>
            <path d="M0 20A21 21 0 0 1 42 17C42 24 37 28 31 28C26 28 24 26.500 25 24.500C27 22 27 16.500 21 13.500C13 9.500 3 11 0 20Z" fill="url(#eg)" />
            <path d="M0 20C1 13 8 9.700 14 10.500C21 11.500 26 15 25.500 20C22 15.500 14 18 13 26C12.500 33 18 40 26 41.400A21 21 0 0 1 0 20Z" fill="url(#eb)" />
            <path d="M17 15.800C10 20 9 30 15 36.500C18 40 23 42 26.500 41.300C32 40 36.500 37 39 32C32 35 25 33.500 22 29C19.500 25 21 20 24 17.500C22.500 15.500 19.500 14.800 17 15.800Z" fill="#114f9e" />
          </svg>
        </TaskIcon>
        <TaskIcon $run $group>
          <svg width="38" height="31" viewBox="0 0 38 31">
            <path d="M0 1.500Q0 0 1.500 0H13L18 4V7H0Z" fill="#e3a008" /><path d="M0 7H13L18 3.500H36.500Q38 3.500 38 5V28Q38 29.500 36.500 29.500H1.500Q0 29.500 0 28Z" fill="#ffd35c" />
            <path d="M6 31V18.500Q6 16 8.500 16H29Q31.500 16 31.500 18.500V31H25.500V22H12V31Z" fill="#3a8fd9" />
          </svg>
        </TaskIcon>
        <TaskIcon>
          <svg width="41" height="42" viewBox="0 0 41 42">
            <path d="M0 7Q0 6 1 6H40Q41 6 41 7V34Q41 42 33 42H8Q0 42 0 34Z" fill="#f3f3f3" />
            <path d="M10 9V3.500Q10 1.500 12 1.500H29Q31 1.500 31 3.500V9" fill="none" stroke="#19a9ea" strokeWidth="3" />
            <rect x="11.500" y="15" width="8" height="8" fill="#f25022" /><rect x="21.500" y="15" width="8" height="8" fill="#7fba00" />
            <rect x="11.500" y="24.500" width="8" height="8" fill="#00a4ef" /><rect x="21.500" y="24.500" width="8" height="8" fill="#ffb900" />
          </svg>
        </TaskIcon>
        <TaskIcon $run>
          <svg width="41" height="38" viewBox="0 0 41 38">
            <rect x="22" y="4.500" width="18.500" height="29" fill="#fff" stroke="#2b579a" />
            <path d="M24 9H38M24 13H38M24 17H38M24 21H38M24 25H38M24 29H38" stroke="#2b579a" strokeWidth="2" />
            <path d="M0 4L24 0V38L0 34Z" fill="#2b579a" />
            <text x="11.500" y="25.500" textAnchor="middle" fontFamily="Open Sans" fontWeight="700" fontSize="17" fill="#fff" textLength="15" lengthAdjust="spacingAndGlyphs">W</text>
          </svg>
        </TaskIcon>
        <TaskIcon $run>
          <svg width="42" height="42" viewBox="0 0 42 42">
            <rect width="42" height="42" fill="#ec3237" />
            <path d="M13 3Q15 7 18 9M29 3Q27 7 24 9" fill="none" stroke="#fff" strokeWidth="2" /><path d="M15.500 13Q15 7 21 7Q27 7 26.500 13Z" fill="#fff" />
            <path d="M21 14C30 14 32.500 22 32.500 27C32.500 34 27 39 21 39C15 39 9.500 34 9.500 27C9.500 22 12 14 21 14Z" fill="#fff" />
            <circle cx="21" cy="20" r="3" fill="#ec3237" /><ellipse cx="15.500" cy="26" rx="3.600" ry="4" fill="#ec3237" /><ellipse cx="26.500" cy="29" rx="3.600" ry="4" fill="#ec3237" />
            <path d="M21 22V39" stroke="#ec3237" strokeWidth="1.200" />
          </svg>
        </TaskIcon>
        <TaskIcon $run $active><SaleaeIcon s={41} /></TaskIcon>

        <Weather>
          <svg width="43" height="43" viewBox="0 0 43 43">
            <defs><linearGradient id="cl" x1="0" y1="0" x2="0" y2="1"><stop offset="0" stopColor="#a9ccf5" /><stop offset="1" stopColor="#7ba3e6" /></linearGradient></defs>
            <circle cx="35" cy="20" r="8" fill="#f0860c" />
            <path d="M9 42A9 9 0 0 1 7 24.500A11 11 0 0 1 28 22.500A10 10 0 0 1 34 42Z" fill="url(#cl)" />
            <circle cx="32" cy="11.500" r="10.800" fill="#c42b1c" />
            <text x="32" y="17" textAnchor="middle" fontFamily="Open Sans" fontWeight="600" fontSize="15" fill="#fff">3</text>
          </svg>
          <span>59°F</span><span>Mostly cloudy</span>
        </Weather>
        <Tray>
          <svg width="19" height="11" fill="none" stroke="#fff" strokeWidth="1.5"><path d="M1 10L9.500 1.200L18 10" /></svg>
          <svg width="29" height="22" fill="none" stroke="#fff" strokeWidth="1.4"><path d="M7 1.500H28V16.500H4.500M.7 1.500H6.500V9.500H.7ZM3.500 10V20.500M9 20.500H20M14.500 17V20.500M2 4.500H5.500M3.600 4.500V7" /></svg>
          <svg width="24" height="20" fill="none" stroke="#fff" strokeWidth="1.4"><path d="M1 6H4.500L10 .8V19.200L4.500 14H1ZM14.500 6L22.500 14M22.500 6L14.500 14" /></svg>
        </Tray>
        <Clock>2:52 PM<br />3/28/2025</Clock>
        <Notice><svg width="29" height="28" fill="none" stroke="#fff" strokeWidth="1.7"><path d="M1 1H28V22H18L13.500 27L9.500 22H1Z" /></svg></Notice>
        <DesktopEdge />
      </Taskbar>
    </Screen>
  );
}
